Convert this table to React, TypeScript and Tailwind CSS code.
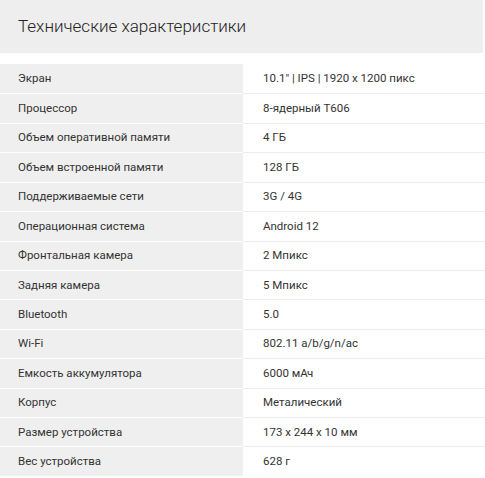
const specs: [string, string][] = [
  ["Экран", "10.1\" | IPS | 1920 x 1200 пикс"],
  ["Процессор", "8-ядерный T606"],
  ["Объем оперативной памяти", "4 ГБ"],
  ["Объем встроенной памяти", "128 ГБ"],
  ["Поддерживаемые сети", "3G / 4G"],
  ["Операционная система", "Android 12"],
  ["Фронтальная камера", "2 Мпикс"],
  ["Задняя камера", "5 Мпикс"],
  ["Bluetooth", "5.0"],
  ["Wi-Fi", "802.11 a/b/g/n/ac"],
  ["Емкость аккумулятора", "6000 мАч"],
  ["Корпус", "Металический"],
  ["Размер устройства", "173 x 244 x 10 мм"],
  ["Вес устройства", "628 г"],
];

export default function App() {
  return (
    <div className="h-[478px] w-[485px] bg-white font-['Roboto',sans-serif] text-[#333]">
      <div className="flex h-[53px] w-[483px] items-center bg-[#efeeee] pl-[18px]">
        <h2 className="text-[17px] font-light text-[#222]">Технические характеристики</h2>
      </div>
      <div className="mt-[11px] flex flex-col">
        {specs.map(([label, value], i) => (
          <div key={label} className="flex h-[29.43px] text-[11.5px]">
            <div
              className={`flex w-[243px] items-center bg-[#f0efef] pl-[18px] ${
                i > 0 ? "border-t border-white" : ""
              }`}
            >
              {label}
            </div>
            <div
              className={`flex flex-1 items-center pl-[20px] ${
                i > 0 ? "border-t border-[#ececec]" : ""
              }`}
            >
              {value}
            </div>
          </div>
        ))}
      </div>
    </div>
  );
}
